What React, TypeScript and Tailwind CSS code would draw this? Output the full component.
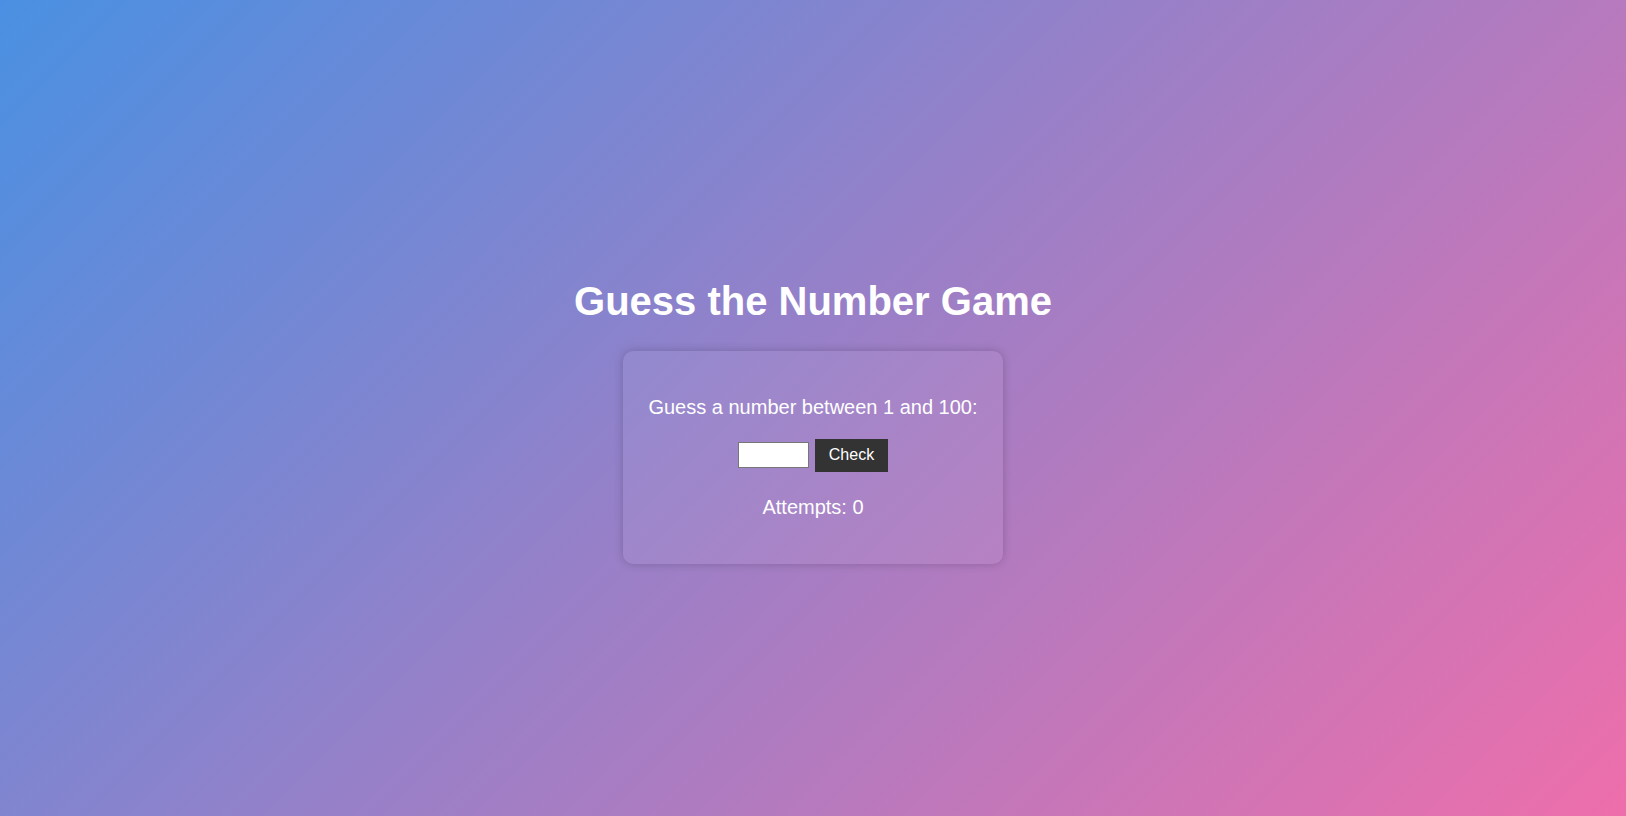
import React, { useState } from 'react';

export default function App() {
  const [guess, setGuess] = useState('');
  const [attempts, setAttempts] = useState(0);

  return (
    <div className="h-screen w-full flex flex-col items-center justify-center pb-[2px] bg-[linear-gradient(135deg,#4a90e2,#ee6eab)] font-['Liberation_Sans',Arial,sans-serif] text-white">
      <h1 className="text-[40px] leading-[46px] font-bold my-[27px]">Guess the Number Game</h1>
      <div className="w-[380px] rounded-[10px] bg-white/[0.06] shadow-[0_0_10px_rgba(0,0,0,0.2)] pt-[45px] pb-[45px] flex flex-col items-center">
        <p className="text-[20px] leading-[23px]">Guess a number between 1 and 100:</p>
        <div className="mt-[20px] h-[33px] flex items-center gap-[6px]">
          <input
            type="number"
            value={guess}
            onChange={(e) => setGuess(e.target.value)}
            className="w-[71px] h-[26px] bg-white border border-[#767676] text-black text-[13px] px-1 outline-none [appearance:textfield] [&::-webkit-inner-spin-button]:appearance-none"
          />
          <button
            type="button"
            onClick={() => setAttempts((a) => a + 1)}
            className="w-[73px] h-[33px] bg-[#333333] text-white text-[16px] leading-[18px]"
          >
            Check
          </button>
        </div>
        <p className="mt-[24px] text-[20px] leading-[23px]">Attempts: {attempts}</p>
      </div>
    </div>
  );
}
